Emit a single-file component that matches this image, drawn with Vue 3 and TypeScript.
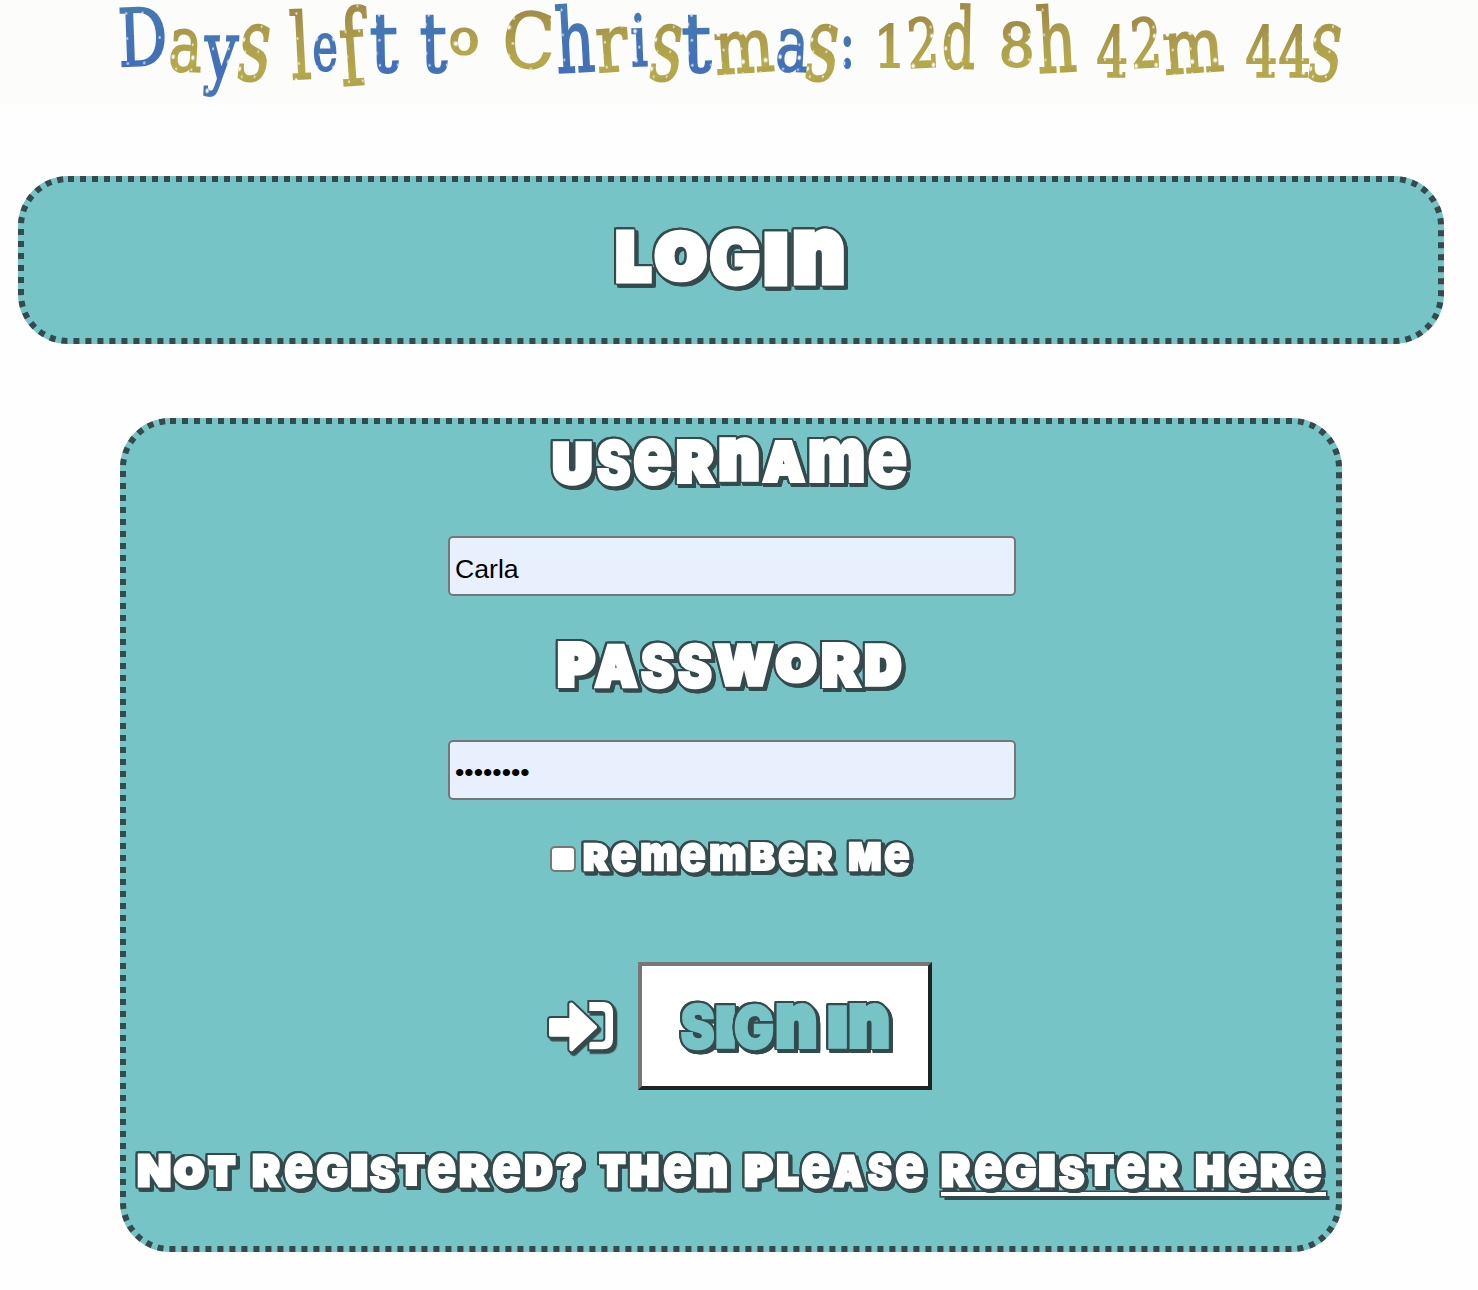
<script setup lang="ts">
import { h, ref } from 'vue'

/* Glyph boxes are [left, right, top, bottom], in thirds of a pixel. */
type Box = [number, number, number, number]

interface LetteringProps {
  text: string
  boxes: Box[]
  kind: 'chunky' | 'festive'
  tones?: string
}

const UNIT = 3
const BLEED = 10
const FONTS = {
  chunky: '900 100px Inter, "Liberation Sans", sans-serif',
  festive: '400 100px "DejaVu Serif", "Liberation Serif", serif',
}
/* Extra boldness as a share of the letter height; narrow openings need less. */
const HEFT: Record<string, number> = { e: 0.035, S: 0.05, G: 0.05, R: 0.08, A: 0.09, W: 0.08, M: 0.08, m: 0.08, B: 0.07, '?': 0.07, N: 0.08 }
const LEAN: Record<string, number> = { D: -2, a: 3, l: -3, f: -4, C: 2, h: -3, r: -4, i: -2, m: -4, '2': -3, d: 1, t: -1 }
const SLANT: Record<string, number> = { s: -8, y: -3 }
const pen = document.createElement('canvas').getContext('2d')!

/* Fits every letter of a line into its own box, for hand-cut uneven lettering. */
const Lettering = (props: LetteringProps) => {
  const { text, boxes, kind, tones } = props
  const chunky = kind === 'chunky'
  const top = Math.min(...boxes.map((b) => b[2]))
  const bottom = Math.max(...boxes.map((b) => b[3]))
  const origin = boxes[0][0]
  const end = boxes[boxes.length - 1][1]
  const unicase = (c: string) => (!chunky || 'enm'.includes(c) ? c : c.toUpperCase())
  pen.font = FONTS[kind]

  const chars = [...text]
  let index = 0
  const cells = chars.map((raw, at) => {
    if (raw === ' ') {
      const gap = (boxes[index][0] - boxes[index - 1][1]) / UNIT
      return h('span', { class: 'cell', style: { width: `${gap}px` } }, '\u00a0')
    }
    const box = boxes[index]
    const tone = tones ? (tones[index] === 'b' ? ' blue' : ' gold') : ''
    index++
    const next = boxes[index]
    const cellEnd = !next || chars[at + 1] === ' ' ? box[1] : next[0]

    const char = unicase(raw)
    const m = pen.measureText(char)
    const height = (box[3] - box[2]) / UNIT
    const width = (box[1] - box[0]) / UNIT
    const weight = chunky ? height * (HEFT[char] ?? 0.12) : 2.2
    const insetX = (chunky ? 0.5 : 0) + weight / 2
    const insetY = (chunky ? 1.4 : 0) + weight / 2
    const inkHeight = (m.actualBoundingBoxAscent + m.actualBoundingBoxDescent) / 100
    const inkWidth = (m.actualBoundingBoxRight + m.actualBoundingBoxLeft) / 100
    const size = (height - 2 * insetY) / inkHeight
    const stretch = (width - 2 * insetX) / (inkWidth * size)
    const base = 0.7 * size + ((m.fontBoundingBoxAscent - m.fontBoundingBoxDescent) / 200) * size
    const inkTop = base - (m.actualBoundingBoxAscent / 100) * size
    const offset = (box[2] - top) / UNIT
    const dx = insetX + ((m.actualBoundingBoxLeft / 100) * size - BLEED) * stretch
    const dy = offset + insetY - inkTop - BLEED + (chunky ? 0.5 : 0)
    const cx = width / 2
    const cy = offset + height / 2
    const tilt = chunky ? 0 : (LEAN[char] ?? 0)
    const slant = chunky ? 0 : (SLANT[char] ?? 0)

    return h('span', { class: 'cell', style: { width: `${(cellEnd - box[0]) / UNIT}px` } }, [
      h(
        'span',
        {
          class: `glyph${tone}`,
          style: {
            fontSize: `${size}px`,
            padding: `${BLEED}px`,
            transform:
              `translate(${cx}px, ${cy}px) rotate(${tilt}deg) skewX(${slant}deg) translate(${-cx}px, ${-cy}px) ` +
              `translate(${dx}px, ${dy}px) scaleX(${stretch})`,
            '--weight': `${weight}px`,
          },
        },
        char,
      ),
    ])
  })

  return h(
    'span',
    {
      class: `lettering ${kind}`,
      style: { width: `${(end - origin) / UNIT}px`, height: `${(bottom - top) / UNIT}px` },
    },
    cells,
  )
}
Lettering.props = ['text', 'boxes', 'kind', 'tones']

const countdown: Box[] = [
  [60, 196, 22, 202], [209, 305, 86, 218], [306, 416, 106, 291], [421, 508, 73, 247],
  [570, 629, 26, 240], [639, 711, 102, 218], [721, 811, 16, 260], [810, 897, 44, 221],
  [960, 1044, 44, 221], [1051, 1136, 86, 170],
  [1216, 1357, 32, 211], [1368, 1482, 12, 221], [1490, 1586, 83, 218], [1594, 1643, 39, 202],
  [1656, 1743, 73, 247], [1745, 1836, 44, 221], [1845, 2022, 95, 221], [2031, 2125, 86, 218],
  [2124, 2212, 73, 247], [2230, 2256, 108, 207],
  [2337, 2401, 72, 207], [2428, 2507, 52, 207], [2530, 2627, 12, 213],
  [2703, 2796, 67, 208], [2810, 2926, 12, 221],
  [2992, 3082, 75, 234], [3096, 3174, 52, 207], [3194, 3373, 95, 221],
  [3438, 3529, 75, 234], [3538, 3630, 75, 234], [3635, 3723, 73, 247],
]
const login: Box[] = [[44, 157, 52, 224], [161, 323, 56, 221], [328, 482, 50, 233], [492, 563, 58, 232], [575, 733, 50, 229]]
const username: Box[] = [
  [66, 187, 57, 197], [197, 302, 52, 200], [310, 427, 50, 202], [437, 556, 50, 194],
  [565, 690, 50, 192], [697, 829, 53, 192], [833, 1004, 52, 194], [1015, 1133, 51, 200],
]
const password: Box[] = [
  [82, 201, 31, 180], [191, 325, 35, 178], [329, 434, 33, 180], [442, 548, 33, 180],
  [553, 733, 36, 175], [736, 864, 36, 167], [873, 995, 32, 178], [1001, 1116, 36, 176],
]
const remember: Box[] = [
  [159, 239, 33, 128], [245, 322, 33, 130], [331, 444, 34, 128], [452, 530, 33, 130],
  [538, 650, 35, 127], [660, 738, 34, 129], [745, 825, 33, 130], [832, 912, 33, 128],
  [955, 1055, 33, 129], [1064, 1142, 33, 131],
]
const signIn: Box[] = [
  [451, 556, 155, 303], [557, 615, 163, 302], [611, 731, 158, 303], [734, 860, 156, 302],
  [895, 953, 163, 302], [955, 1080, 156, 302],
]
const notRegistered: Box[] = [
  [80, 183, 67, 178], [189, 286, 70, 171], [292, 380, 70, 176],
  [427, 516, 66, 177], [523, 611, 66, 179], [618, 714, 66, 179], [722, 771, 70, 177],
  [776, 857, 69, 180], [862, 948, 70, 175], [951, 1039, 66, 179], [1047, 1140, 66, 177],
  [1147, 1234, 66, 179], [1241, 1329, 70, 178], [1335, 1418, 66, 181],
  [1465, 1550, 69, 176], [1558, 1649, 69, 177], [1659, 1746, 66, 179], [1755, 1853, 66, 176],
  [1901, 1991, 71, 179], [1998, 2069, 67, 177], [2074, 2162, 66, 179], [2165, 2262, 69, 177],
  [2270, 2346, 68, 180], [2356, 2444, 66, 179],
]
const register: Box[] = [
  [33, 125, 66, 177], [131, 217, 66, 179], [225, 320, 66, 179], [328, 376, 70, 177],
  [383, 464, 69, 180], [469, 555, 70, 175], [559, 648, 66, 179], [653, 747, 66, 177],
  [795, 885, 69, 176], [895, 983, 66, 179], [990, 1082, 66, 177], [1090, 1177, 66, 179],
]

const name = ref('Carla')
const secret = ref('mistleto')
const keep = ref(false)
</script>

<template>
  <main class="page">
    <header class="banner">
      <Lettering
        kind="festive"
        text="Days left to Christmas: 12d 8h 42m 44s"
        tones="bgbggbgbbggbgbgbgbgbggggggggggg"
        :boxes="countdown"
      />
    </header>

    <section class="panel title">
      <svg class="dots" aria-hidden="true"><rect class="dot-line title-line" x="3" y="3" rx="47" /></svg>
      <h1><Lettering kind="chunky" text="Login" :boxes="login" /></h1>
    </section>

    <form class="panel form" @submit.prevent>
      <svg class="dots" aria-hidden="true"><rect class="dot-line form-line" x="3" y="3" rx="47" /></svg>
      <label class="caption" for="user"><Lettering kind="chunky" text="Username" :boxes="username" /></label>
      <input id="user" v-model="name" class="field" type="text" />
      <label class="caption second" for="pass"><Lettering kind="chunky" text="Password" :boxes="password" /></label>
      <input id="pass" v-model="secret" class="field secret" type="password" />

      <label class="remember">
        <input v-model="keep" class="check" type="checkbox" />
        <Lettering kind="chunky" text="Remember Me" :boxes="remember" />
      </label>

      <div class="actions">
        <svg class="icon" viewBox="48 150 216 168" aria-hidden="true">
          <path d="M175 153H218Q252 153 252 188V268Q252 301 218 301H175V272H214Q223 272 223 263V194Q223 186 214 186H175Z" />
          <path d="M62 201H115V162Q115 155 122 154.500Q127 154 131 158L202 226Q207 231 202 237L131 304Q126 309 120 305.500Q115 303 115 298V263H62Q54 263 54 255V209Q54 201 62 201Z" />
        </svg>
        <button class="submit" type="submit"><Lettering kind="chunky" text="Sign In" :boxes="signIn" /></button>
      </div>

      <p class="signup">
        <Lettering kind="chunky" text="Not Registered? Then Please" :boxes="notRegistered" />
        <a class="link" href="#"><Lettering kind="chunky" text="Register Here" :boxes="register" /></a>
      </p>
    </form>
  </main>
</template>

<style>
body {
  margin: 0;
  background: #fefefe;
}
</style>

<style scoped>
.page {
  --teal: #77c4c6;
  --ink: #354a4c;
  width: 1478px;
  height: 1290px;
  font-family: "Liberation Sans", sans-serif;
}
.banner {
  box-sizing: border-box;
  height: 104px;
  padding: 4px 0 0 120px;
  background: #fcfcfa;
}
:deep(.lettering) {
  display: inline-block;
  flex: none;
  vertical-align: top;
  white-space: nowrap;
  font-size: 0;
  line-height: 0;
  text-align: left;
}
:deep(.chunky) {
  font-family: Inter, "Liberation Sans", sans-serif;
  font-weight: 900;
  color: #fff;
}
:deep(.festive) {
  font-family: "DejaVu Serif", "Liberation Serif", serif;
  font-weight: 400;
}
:deep(.cell) {
  display: inline-block;
  height: 100%;
  vertical-align: top;
}
:deep(.chunky .cell) {
  filter: drop-shadow(1.6px 0 0 var(--ink)) drop-shadow(-1.6px 0 0 var(--ink)) drop-shadow(0 1.6px 0 var(--ink))
    drop-shadow(0 -1.6px 0 var(--ink)) drop-shadow(3px 3px 0 var(--ink));
}
:deep(.glyph) {
  display: inline-block;
  line-height: 1.4;
  transform-origin: 0 0;
  vertical-align: top;
  -webkit-text-stroke: var(--weight) currentColor;
}
:deep(.gold),
:deep(.blue) {
  color: transparent;
  -webkit-background-clip: text;
  background-clip: text;
}
:deep(.gold) {
  background-image: radial-gradient(circle, #fff 0 1.2px, #fff8 2px, transparent 3.2px),
    radial-gradient(circle, #fffb 0 0.8px, transparent 2px),
    linear-gradient(168deg, #9c8445 20%, #ac9d4b 45%, #b6a94c 65%, #a38b45 90%);
  background-size: 27px 29px, 21px 25px, 100% 100%;
  background-position: 3px 5px, 11px 2px, 0 0;
}
:deep(.blue) {
  background-image: radial-gradient(circle, #fff 0 1.2px, #fff8 2px, transparent 3.2px),
    radial-gradient(circle, #fffb 0 0.8px, transparent 2px),
    linear-gradient(170deg, #467bb0 25%, #426fb9 65%, #4a7daa 90%);
  background-size: 27px 29px, 21px 25px, 100% 100%;
  background-position: 3px 5px, 11px 2px, 0 0;
}
.panel {
  position: relative;
  box-sizing: border-box;
  display: flex;
  flex-direction: column;
  align-items: center;
  border-radius: 50px;
  background: var(--teal);
}
.title {
  width: 1426px;
  height: 168px;
  margin: 72px 0 0 18px;
  padding-top: 50.7px;
}
.title h1 {
  margin: 0 3px 0 0;
  font-size: 0;
}
.dots {
  position: absolute;
  inset: 0;
  width: 100%;
  height: 100%;
}
.dot-line {
  fill: none;
  stroke: var(--ink);
  stroke-width: 6;
  stroke-dasharray: 6 6;
}
.title-line {
  width: 1420px;
  height: 162px;
}
.form-line {
  width: 1216px;
  height: 828px;
}
.form {
  width: 1222px;
  height: 834px;
  margin: 74px 0 0 120px;
  padding-top: 18.7px;
}
.caption {
  height: 99.3px;
  margin-right: 2.5px;
}
.caption.second {
  height: 99.7px;
  margin-top: 44.3px;
}
.field {
  position: relative;
  box-sizing: border-box;
  flex: none;
  width: 568px;
  height: 60px;
  margin: 0 0 0 2px;
  padding: 8px 5px 0;
  border: 2px solid #767676;
  border-radius: 5px;
  outline: none;
  background: #e8f0fe;
  color: #000;
  font: 26.67px "Liberation Sans", sans-serif;
}
.secret {
  padding: 7px 5px 1px;
}
.remember {
  display: flex;
  align-items: flex-start;
  gap: 7px;
  height: 121px;
  margin: 41px 2px 0 0;
}
.check {
  appearance: none;
  box-sizing: border-box;
  width: 26px;
  height: 26px;
  margin: 5px 0 0;
  border: 2px solid #767676;
  border-radius: 5px;
  background: #fff;
}
.actions {
  display: flex;
  align-items: center;
  gap: 20px;
  height: 128px;
  margin-left: 16px;
}
.icon {
  width: 72px;
  height: 56px;
  margin-top: 4px;
  overflow: visible;
}
.icon path {
  fill: #fff;
  stroke: var(--ink);
  stroke-width: 6;
  filter: drop-shadow(7px 8px 0 var(--ink));
}
.submit {
  box-sizing: border-box;
  display: flex;
  justify-content: center;
  width: 294px;
  height: 128px;
  padding: 35.7px 0 0;
  border: 4px solid;
  border-color: #767676 #1f2323 #1f2323 #767676;
  background: #fff;
}
.submit :deep(.chunky) {
  color: var(--teal);
}
.signup {
  display: flex;
  align-items: flex-start;
  gap: 16.3px;
  width: 1190px;
  margin: 62px -1.3px 0 0;
}
.link {
  position: relative;
  isolation: isolate;
  width: 384.7px;
  height: 44px;
  text-decoration: none;
}
.link::after {
  content: "";
  position: absolute;
  z-index: -1;
  top: 40px;
  left: 0;
  width: 100%;
  height: 4px;
  background: #fff;
  box-shadow: 0 0 0 1.6px var(--ink), 3.500px 4px 0 var(--ink);
}
</style>
